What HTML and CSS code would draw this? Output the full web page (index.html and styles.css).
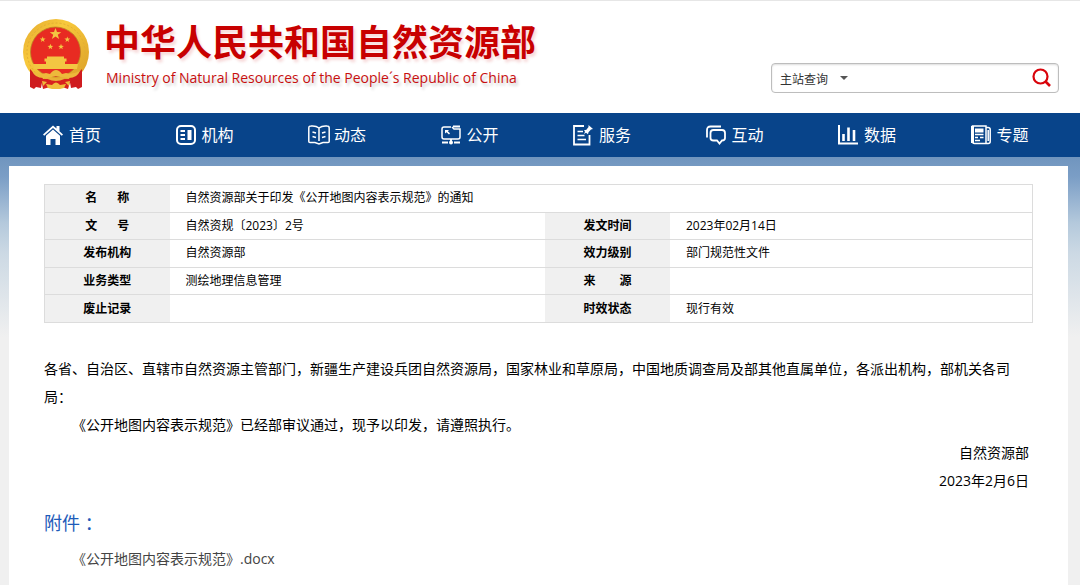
FILE: index.html
```html
<!DOCTYPE html>
<html lang="zh-CN">
<head>
  <meta charset="utf-8">
  <title>中华人民共和国自然资源部</title>
  <link rel="stylesheet" href="styles.css">
</head>
<body>
<header class="header">
  <div class="brand">
    <svg class="emblem" viewBox="7 6 68 72" aria-hidden="true">
      <defs>
        <linearGradient id="gold" x1="0" y1="0" x2="1" y2="1">
          <stop offset="0" stop-color="#e3a92f"/>
          <stop offset=".35" stop-color="#f8c93c"/>
          <stop offset="1" stop-color="#d99c25"/>
        </linearGradient>
        <path id="star" d="M0-6 1.5-1.9 5.8-1.8 2.3.8 3.6 5 0 2.5-3.6 5-2.3.8-5.8-1.8-1.5-1.9z"/>
      </defs>
      <circle cx="41" cy="40" r="33" fill="url(#gold)"/>
      <circle cx="41" cy="40" r="29" fill="none" stroke="#e2ae34" stroke-width="1" stroke-dasharray="2 2"/>
      <circle cx="40.500" cy="40" r="25" fill="#e82b22" stroke="#b98425" stroke-width=".8"/>
      <g fill="#f3c642">
        <use href="#star" x="40.500" y="22"/>
        <use href="#star" transform="translate(27.700 27.500) scale(.5)"/>
        <use href="#star" transform="translate(52.300 27.500) scale(.5)"/>
        <use href="#star" transform="translate(35.400 34.800) scale(.5)"/>
        <use href="#star" transform="translate(46 34.800) scale(.5)"/>
        <path d="M32 44.500h17v2h2.500v3H50V52h11v3H20v-3h11v-2.500h-1.500v-3H32z"/>
        <path d="M18 52h45l-1 5H19z"/>
      </g>
      <path d="M15 57q5 6 13 8l-2 11-5-1-2 2-4-2V66z" fill="#cf1c1f"/>
      <path d="M67 57q-5 6-13 8l2 11 5-1 2 2 4-2V66z" fill="#cf1c1f"/>
      <path d="M26 67h30l-3 10-6-2-6 2-6-2-7 2z" fill="#d8211f"/>
      <path d="M17 59q8 4 14 2l4 1q3-4 6-4t6 4l4-1q6 2 14-2-3 7-11 7-6 0-13-2-7 2-13 2-8 0-11-7z" fill="#edb93b"/>
      <path d="M31 72l6 1q4-5 8 0l6-1-2 4-4 1h-8l-4-1z" fill="#f0bd3c"/>
      <path d="M27 69l5 1-4 4zM55 69l-5 1 4 4z" fill="#edb93b"/>
      <path d="M33 66q8 4 16 0" fill="none" stroke="#e8b03a" stroke-width="2"/>
    </svg>
    <div>
      <h1 class="brand-title">中华人民共和国自然资源部</h1>
      <p class="brand-sub">Ministry of Natural Resources of the People´s Republic of China</p>
    </div>
  </div>
  <form class="search">
    <div class="search-scope">
      <select aria-label="查询范围">
        <option>主站查询</option>
      </select>
    </div>
    <input type="text" aria-label="关键词">
    <button type="submit" aria-label="搜索">
      <svg viewBox="0 0 20 20" fill="none" stroke="#d9040b">
        <circle cx="8.500" cy="8.500" r="7" stroke-width="2.200"/>
        <path d="M13.500 13.500l4.500 4.500" stroke-width="2.600"/>
      </svg>
    </button>
  </form>
</header>

<nav class="nav">
  <a href="#">
    <svg viewBox="0 0 20 20" fill="#fff">
      <path d="M10 .5l3.500 3V1h3v5.200L20 9.600l-1.200 1.200L10 3 1.200 10.800 0 9.600z"/>
      <path d="M10 4.400l7 6.300V20h-4.500v-6h-5v6H3v-9.300z"/>
    </svg>首页</a>
  <a href="#">
    <svg viewBox="0 0 20 20" fill="none" stroke="#fff" stroke-width="2">
      <rect x="1" y="1" width="18" height="18" rx="4"/>
      <path d="M4.500 6H9M4.500 10H9M4.500 14H9"/>
      <rect x="11.500" y="5" width="4" height="10" fill="#fff" stroke="none"/>
    </svg>机构</a>
  <a href="#">
    <svg viewBox="0 0 20 20" fill="none" stroke="#fff" stroke-width="1.500">
      <path d="M11 3Q8 .5 3 1 .8 1 .8 3v13.500q0 1 1.200 1h5L11 19l4-1.500h5q1.200 0 1.200-1V3q0-2-2.200-2-5-.5-8 2zM11 3v13"/>
      <path d="M4.500 7l3.500 1M4.500 11.500l3.500 1M17.500 7L14 8M17.500 11.500l-3.500 1"/>
    </svg>动态</a>
  <a href="#">
    <svg viewBox="0 0 20 20" fill="none" stroke="#fff" stroke-width="1.500">
      <path d="M10 2H3Q1 2 1 4v8q0 2 2 2h14q2 0 2-2V4h-6l-2-2"/>
      <path d="M12 1.500h7M10 14v3M1 17.500h6M13 17.500h6" stroke-width="1.800"/>
      <circle cx="10" cy="17.500" r="2" fill="#fff" stroke="none"/>
      <path d="M4 5h4L6.800 6.300 9 8.300 8 9.400 5.600 7.300 4 8.500z" fill="#fff" stroke="none"/>
    </svg>公开</a>
  <a href="#">
    <svg viewBox="0 0 20 20" fill="none" stroke="#fff" stroke-width="1.800">
      <path d="M11 1H1v18.500h15.500V10"/>
      <path d="M4.500 6.500H10M4.500 10.500h7M4.500 14.500H13" stroke-width="1.500"/>
      <path d="M15.500 0L20 4l-2 .5-2.500 2.800-.5 2-2-1.600L11 9l1-2.300-1-1.500 2.400-.5L15.500 2z" fill="#fff" stroke="none"/>
    </svg>服务</a>
  <a href="#">
    <svg viewBox="0 0 20 20" fill="none" stroke="#fff" stroke-width="1.800">
      <path d="M1 12.500V5q0-3.500 3.500-3.500H15"/>
      <path d="M7.500 5H16q3 0 3 3v5q0 2.500-3 2.500l-2.500 3-2.500-3H7.500q-3 0-3-2.500V8q0-3 3-3z"/>
    </svg>互动</a>
  <a href="#">
    <svg viewBox="0 0 20 20" fill="none" stroke="#fff" stroke-width="2">
      <path d="M1 0v18.500h19"/>
      <path d="M5.500 9v7M10.500 2.500V16M16 5v11" stroke-width="2.600"/>
    </svg>数据</a>
  <a href="#">
    <svg viewBox="0 0 20 20" fill="none" stroke="#fff" stroke-width="1.500">
      <path d="M15 18.500H3.500q-2 0-2-2V1H15zM15 2.500h2q2.200 0 2.200 2v12q0 2-2 2H14M17.200 5v11" />
      <path d="M4 9.500h8.500M4 12.500h3M9 12.500h3.500M4 15.500h5"/>
      <path d="M4 3.500h8.500v4H4z" fill="#fff" stroke="none"/>
      <path d="M1.500 1v17" stroke-width="3"/>
    </svg>专题</a>
</nav>

<main class="page">
  <div class="panel">
    <table class="info">
      <colgroup>
        <col class="col-label">
        <col class="col-value">
        <col class="col-label">
        <col>
      </colgroup>
      <tr>
        <th>名&emsp;&ensp;&thinsp;称</th>
        <td colspan="3">自然资源部关于印发《公开地图内容表示规范》的通知</td>
      </tr>
      <tr>
        <th>文&emsp;&ensp;&thinsp;号</th>
        <td>自然资规〔2023〕2号</td>
        <th>发文时间</th>
        <td>2023年02月14日</td>
      </tr>
      <tr>
        <th>发布机构</th>
        <td>自然资源部</td>
        <th>效力级别</th>
        <td>部门规范性文件</td>
      </tr>
      <tr>
        <th>业务类型</th>
        <td>测绘地理信息管理</td>
        <th>来&emsp;&emsp;源</th>
        <td></td>
      </tr>
      <tr>
        <th>废止记录</th>
        <td></td>
        <th>时效状态</th>
        <td>现行有效</td>
      </tr>
    </table>

    <article class="content">
      <p>各省、自治区、直辖市自然资源主管部门，新疆生产建设兵团自然资源局，国家林业和草原局，中国地质调查局及部其他直属单位，各派出机构，部机关各司局：</p>
      <p class="indent">《公开地图内容表示规范》已经部审议通过，现予以印发，请遵照执行。</p>
      <p class="sign">自然资源部</p>
      <p class="sign">2023年2月6日</p>
    </article>

    <section class="attach">
      <h2>附件 ：</h2>
      <a href="#">《公开地图内容表示规范》.docx</a>
    </section>
  </div>
</main>
</body>
</html>
```
FILE: styles.css
```css
* {
  box-sizing: border-box;
}

body {
  display: flex;
  flex-direction: column;
  min-height: 100vh;
  margin: 0;
  font-family: "Open Sans", "Noto Sans CJK SC", sans-serif;
  font-size: 14px;
  color: #000;
  background: #f0f0f0;
}

h1, h2, p {
  margin: 0;
}

a {
  text-decoration: none;
}

/* header */
.header {
  display: flex;
  justify-content: space-between;
  align-items: flex-end;
  padding: 17px 21px 20px 22px;
  border-top: 1px solid #e6e6e6;
  background: #fff;
}

.brand {
  display: flex;
  gap: 14px;
  padding-bottom: 3px;
}

.emblem {
  width: 68px;
  height: 72px;
}

.brand-title {
  font-size: 36px;
  line-height: 50px;
  color: #c80000;
  text-shadow: 2px 3px 3px rgba(200, 0, 0, 0.15);
}

.brand-sub {
  padding-left: 2px;
  font-size: 14px;
  line-height: 20px;
  color: #c80f0f;
  text-shadow: 2px 3px 3px rgba(0, 0, 0, 0.2);
}

.search {
  display: flex;
  align-items: center;
  width: 288px;
  height: 30px;
  border: 1px solid #bdbdbd;
  border-radius: 4px;
  box-shadow: inset 0 1px 2px #ddd;
}

.search-scope {
  position: relative;
}

.search-scope::after {
  content: "";
  position: absolute;
  top: 50%;
  right: 0;
  margin-top: -2px;
  border: 4px solid transparent;
  border-top-color: #555;
  border-bottom: 0;
  pointer-events: none;
}

.search select {
  width: 76px;
  padding: 0 0 0 8px;
  border: 0;
  appearance: none;
  background: none;
  font-family: inherit;
  font-size: 12px;
  color: #333;
}

.search input {
  flex: 1;
  min-width: 0;
  border: 0;
  outline: 0;
  background: none;
}

.search button {
  display: flex;
  padding: 0 6px;
  border: 0;
  background: none;
  cursor: pointer;
}

.search button svg {
  width: 20px;
  height: 20px;
}

/* nav */
.nav {
  display: flex;
  padding: 0 10px;
  background: #08448a;
}

.nav a {
  display: flex;
  flex: 1;
  align-items: center;
  gap: 6px;
  padding-left: 33px;
  font-size: 16px;
  line-height: 44px;
  color: #fff;
}

.nav svg {
  width: 20px;
  height: 20px;
  overflow: visible;
}

/* page */
.page {
  display: flex;
  flex: 1;
  padding: 9px 12px 0 9px;
  background: linear-gradient(#7095be, #7b9ec6 20px, #b4c9dc 66px, #ccd9e4 96px, #f0f0f0 180px);
}

.panel {
  flex: 1;
  padding: 18px 35px 12px;
  background: #fff;
}

.info {
  width: 100%;
  height: 139px;
  table-layout: fixed;
  border: 1px solid #dcdcdc;
  border-collapse: collapse;
  font-size: 12px;
}

.info tr {
  border-bottom: 1px solid #dcdcdc;
}

.info th,
.info td {
  padding: 0;
  line-height: 18px;
}

.info th {
  background: #f0f0f0;
}

.info td {
  padding-left: 16px;
}

.col-label {
  width: 125px;
}

.col-value {
  width: 38%;
}

.content {
  margin-top: 32px;
  padding-right: 4px;
  line-height: 28px;
}

.indent {
  text-indent: 28px;
}

.sign {
  text-align: right;
}

.attach {
  margin-top: 14px;
  line-height: 28px;
}

.attach h2 {
  margin-bottom: 8px;
  font-size: 18px;
  font-weight: normal;
  color: #1d5bb9;
}

.attach a {
  display: block;
  padding-left: 28px;
  color: #444;
}
```
